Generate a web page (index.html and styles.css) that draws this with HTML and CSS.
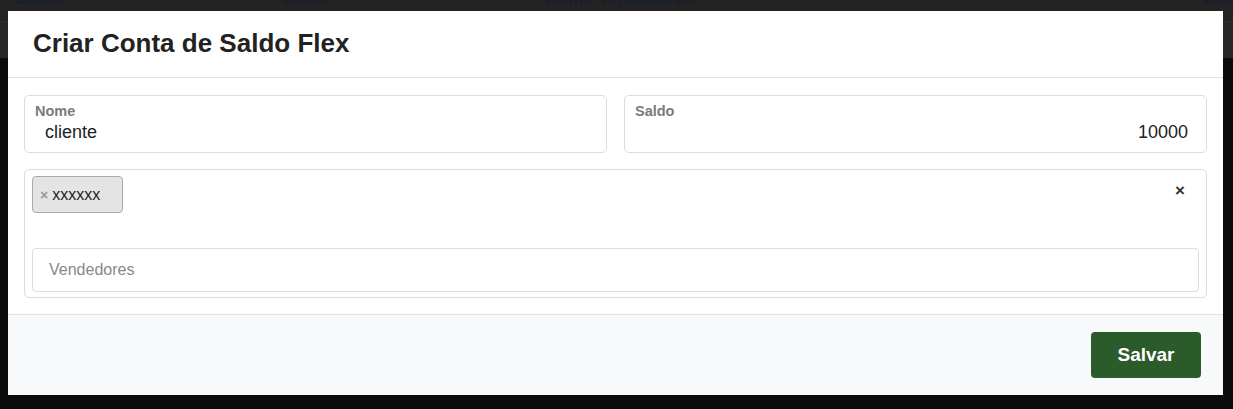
FILE: index.html
```html
<!DOCTYPE html>
<html lang="pt">
<head>
<meta charset="utf-8">
<title>Criar Conta de Saldo Flex</title>
<link rel="stylesheet" href="styles.css">
</head>
<body>
<div class="backdrop">
  <div class="bg-head">
    <span class="bg-col c1">Saldo</span>
    <span class="bg-col c2">Ativo</span>
    <span class="bg-col c3">Nome Vendedores</span>
    <span class="bg-col c4">Criação</span>
  </div>
  <div class="bg-row"></div>
</div>
<div class="modal">
  <div class="modal-header">
    <h1 class="modal-title">Criar Conta de Saldo Flex</h1>
  </div>
  <div class="modal-body">
    <div class="row">
      <div class="field">
        <label class="field-label">Nome</label>
        <div class="field-value">cliente</div>
      </div>
      <div class="field">
        <label class="field-label">Saldo</label>
        <div class="field-value right">10000</div>
      </div>
    </div>
    <div class="select-box">
      <div class="chips">
        <span class="chip"><span class="chip-x">×</span>xxxxxx</span>
        <span class="clear">×</span>
      </div>
      <div class="search">Vendedores</div>
    </div>
  </div>
  <div class="modal-footer">
    <button class="btn-save">Salvar</button>
  </div>
</div>
</body>
</html>
```

FILE: styles.css
```css
* { box-sizing: border-box; }
html, body { margin: 0; padding: 0; }
body {
  background: #0b0b0b;
  font-family: "Liberation Sans", Arial, sans-serif;
  width: 1233px;
  height: 409px;
  overflow: hidden;
  position: relative;
}
.backdrop {
  position: absolute;
  left: 0; top: 0;
  width: 1233px;
}
.bg-head {
  height: 22px;
  background: #232323;
  border-bottom: 1px solid #2e2e2e;
  position: relative;
}
.bg-col {
  position: absolute;
  top: -11px;
  font-weight: bold;
  font-size: 17px;
  color: #16202e;
}
.c1 { left: 15px; }
.c2 { left: 283px; }
.c3 { left: 545px; }
.c4 { left: 1203px; }
.bg-row {
  height: 36px;
  background: #272727;
}
.modal {
  position: relative;
  margin: 11px 0 0 8px;
  width: 1215px;
  background: #fff;
}
.modal-header {
  height: 67px;
  border-bottom: 1px solid #dee2e6;
  padding: 0 25px;
  display: flex;
  align-items: center;
}
.modal-title {
  margin: 0;
  font-size: 26px;
  font-weight: bold;
  color: #222;
  position: relative;
  top: -1px;
}
.modal-body {
  padding: 17px 16px 16px;
}
.row {
  display: grid;
  grid-template-columns: 1fr 1fr;
  column-gap: 17px;
  margin-bottom: 16px;
}
.field {
  height: 58px;
  border: 1px solid #dcdcdc;
  border-radius: 5px;
  padding: 6px 18px 0 10px;
}
.field-label {
  display: block;
  font-size: 14.5px;
  font-weight: bold;
  color: #7a7a7a;
  line-height: 16px;
  margin-top: 1px;
}
.field-value {
  font-size: 18px;
  color: #222;
  line-height: 20px;
  padding-left: 10px;
  margin-top: 3px;
}
.field-value.right { text-align: right; padding-left: 0; }
.select-box {
  border: 1px solid #dcdcdc;
  border-radius: 5px;
  height: 129px;
  padding: 6px 7px 0;
}
.chips {
  position: relative;
  height: 72px;
}
.chip {
  display: inline-flex;
  align-items: center;
  height: 37px;
  width: 91px;
  background: #e4e4e4;
  border: 1px solid #aaa;
  border-radius: 4px;
  padding: 0 6px 0 7px;
  font-size: 16px;
  color: #222;
}
.chip-x {
  color: #999;
  font-weight: bold;
  font-size: 14px;
  margin-right: 4px;
}
.clear {
  position: absolute;
  right: 14px;
  top: 5px;
  font-weight: bold;
  font-size: 17px;
  color: #333;
}
.search {
  height: 44px;
  border: 1px solid #dcdcdc;
  border-radius: 4px;
  padding: 0 16px;
  display: flex;
  align-items: center;
  font-size: 16px;
  color: #888;
}
.modal-footer {
  background: #f8f9fa;
  border-top: 1px solid #dee2e6;
  height: 81px;
  display: flex;
  justify-content: flex-end;
  align-items: flex-start;
  padding: 17px 22px 0 0;
}
.btn-save {
  width: 110px;
  height: 46px;
  background: #2b5b2a;
  border: none;
  border-radius: 4px;
  color: #fff;
  font-family: "Liberation Sans", Arial, sans-serif;
  font-weight: bold;
  font-size: 19px;
}
```
